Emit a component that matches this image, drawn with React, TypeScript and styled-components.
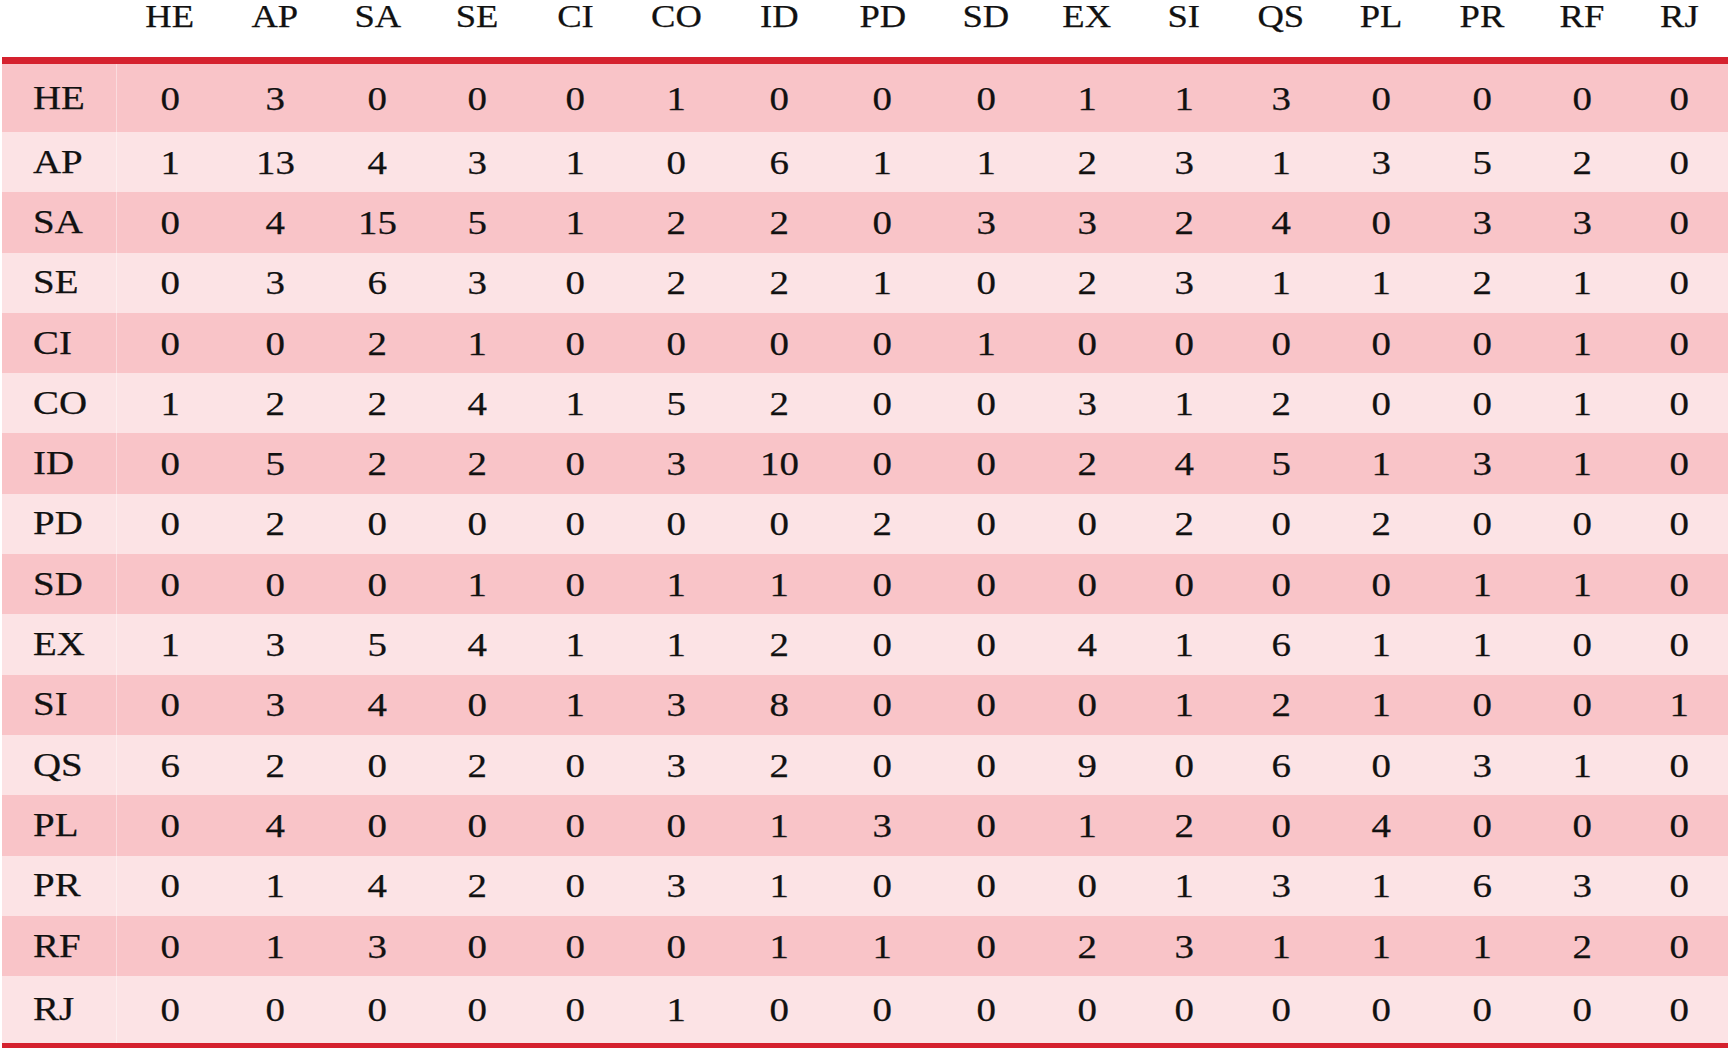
import styled, { createGlobalStyle } from "styled-components";

const GlobalStyle = createGlobalStyle`
  html, body {
    margin: 0;
    padding: 0;
    background: #ffffff;
  }
  body {
    font-family: "Liberation Serif", "Times New Roman", serif;
    color: #111111;
  }
`;

const codes = [
  "HE", "AP", "SA", "SE", "CI", "CO", "ID", "PD",
  "SD", "EX", "SI", "QS", "PL", "PR", "RF", "RJ",
];

// label column + 16 value columns (widths read off the source table)
const columns =
  "115px 106px 104px 101px 97.5px 99px 103.5px 103px 103px 103.5px 99px 95.5px 98.5px 101px 101px 98.5px 97px";

const matrix: number[][] = [
  [0, 3, 0, 0, 0, 1, 0, 0, 0, 1, 1, 3, 0, 0, 0, 0],
  [1, 13, 4, 3, 1, 0, 6, 1, 1, 2, 3, 1, 3, 5, 2, 0],
  [0, 4, 15, 5, 1, 2, 2, 0, 3, 3, 2, 4, 0, 3, 3, 0],
  [0, 3, 6, 3, 0, 2, 2, 1, 0, 2, 3, 1, 1, 2, 1, 0],
  [0, 0, 2, 1, 0, 0, 0, 0, 1, 0, 0, 0, 0, 0, 1, 0],
  [1, 2, 2, 4, 1, 5, 2, 0, 0, 3, 1, 2, 0, 0, 1, 0],
  [0, 5, 2, 2, 0, 3, 10, 0, 0, 2, 4, 5, 1, 3, 1, 0],
  [0, 2, 0, 0, 0, 0, 0, 2, 0, 0, 2, 0, 2, 0, 0, 0],
  [0, 0, 0, 1, 0, 1, 1, 0, 0, 0, 0, 0, 0, 1, 1, 0],
  [1, 3, 5, 4, 1, 1, 2, 0, 0, 4, 1, 6, 1, 1, 0, 0],
  [0, 3, 4, 0, 1, 3, 8, 0, 0, 0, 1, 2, 1, 0, 0, 1],
  [6, 2, 0, 2, 0, 3, 2, 0, 0, 9, 0, 6, 0, 3, 1, 0],
  [0, 4, 0, 0, 0, 0, 1, 3, 0, 1, 2, 0, 4, 0, 0, 0],
  [0, 1, 4, 2, 0, 3, 1, 0, 0, 0, 1, 3, 1, 6, 3, 0],
  [0, 1, 3, 0, 0, 0, 1, 1, 0, 2, 3, 1, 1, 1, 2, 0],
  [0, 0, 0, 0, 0, 1, 0, 0, 0, 0, 0, 0, 0, 0, 0, 0],
];

const Table = styled.div`
  margin-left: 2px;
  width: 1726px;
  display: flex;
  flex-direction: column;
`;

const HeadRow = styled.div`
  display: grid;
  grid-template-columns: ${columns};
  height: 57px;
  border-bottom: 7px solid #d5212e;
`;

const HeadCell = styled.div`
  text-align: center;
  font-size: 31px;
  line-height: 34px;
  -webkit-text-stroke: 0.25px #111;
`;

const Row = styled.div<{ $shade: boolean; $height: number; $last?: boolean }>`
  display: grid;
  grid-template-columns: ${columns};
  height: ${(p) => p.$height}px;
  background: ${(p) => (p.$shade ? "#f9c4c8" : "#fce3e5")};
  border-bottom: ${(p) => (p.$last ? "5px solid #d5212e" : "none")};
`;

const LabelCell = styled.div`
  display: flex;
  align-items: center;
  padding-left: 31px;
  font-size: 33px;
  border-right: 1px solid rgba(255, 255, 255, 0.4);
  -webkit-text-stroke: 0.25px #111;
`;

const ValueCell = styled.div`
  display: flex;
  align-items: center;
  justify-content: center;
  padding-top: 2px;
  font-size: 33px;
  -webkit-text-stroke: 0.25px #111;
`;

const Wide = styled.span<{ $origin?: string }>`
  display: inline-block;
  transform: scaleX(1.18);
  transform-origin: ${(p) => p.$origin || "center"};
`;

const rowHeight = (i: number) => {
  if (i === 0) return 68;
  if (i === codes.length - 1) return 67;
  return 60.3;
};

export default function App() {
  return (
    <>
      <GlobalStyle />
      <Table>
        <HeadRow>
          <div />
          {codes.map((c) => (
            <HeadCell key={c}>
              <Wide>{c}</Wide>
            </HeadCell>
          ))}
        </HeadRow>
        {matrix.map((values, i) => (
          <Row
            key={codes[i]}
            $shade={i % 2 === 0}
            $height={rowHeight(i)}
            $last={i === codes.length - 1}
          >
            <LabelCell>
              <Wide $origin="left">{codes[i]}</Wide>
            </LabelCell>
            {values.map((v, j) => (
              <ValueCell key={j}>
                <Wide>{v}</Wide>
              </ValueCell>
            ))}
          </Row>
        ))}
      </Table>
    </>
  );
}
